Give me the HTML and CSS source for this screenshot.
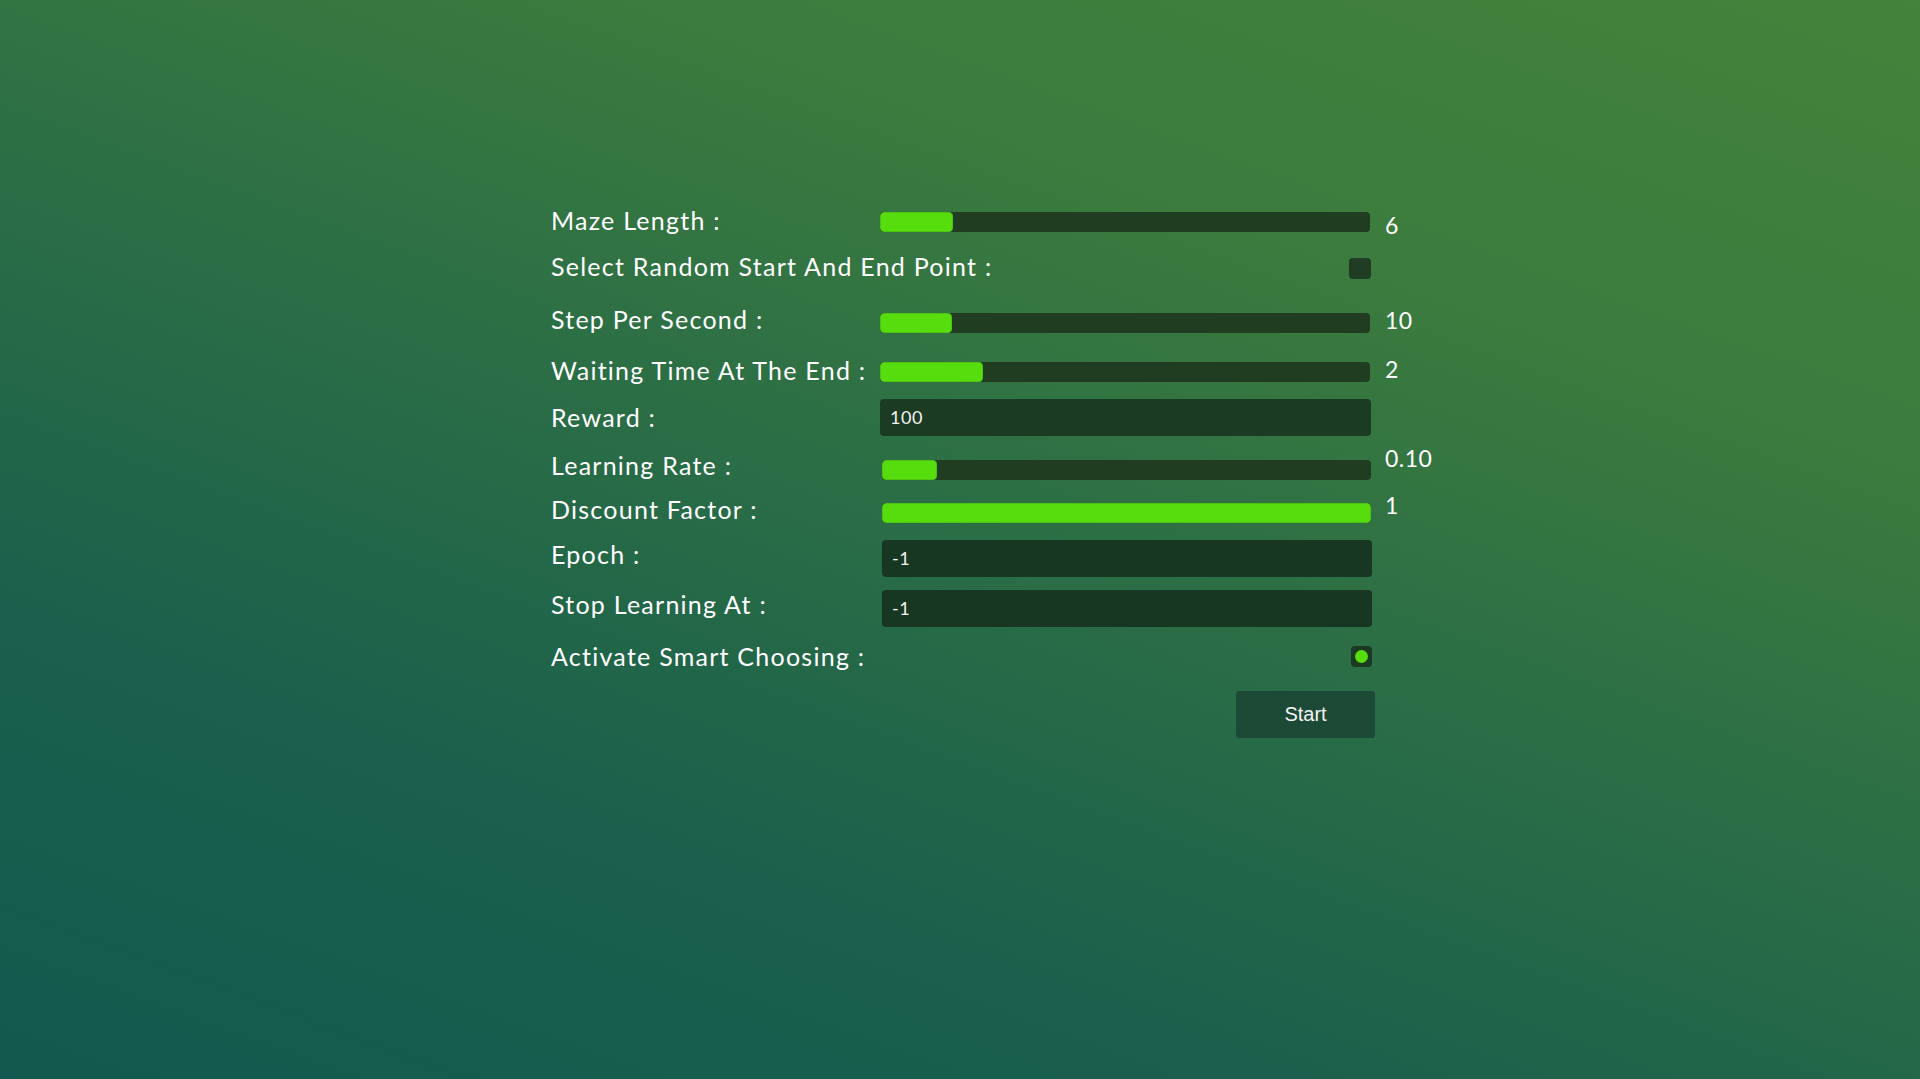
FILE: index.html
```html
<!DOCTYPE html>
<html lang="en">
<head>
<meta charset="utf-8">
<title>Maze Q-Learning Settings</title>
<link rel="stylesheet" href="styles.css">
</head>
<body>
<main class="screen">
  <form class="form">
    <div class="row r1">
      <span class="label">Maze Length :</span>
      <div class="slider"><div class="fill" style="width:14.9%"></div></div>
      <span class="val val-low">6</span>
    </div>
    <div class="row r2">
      <span class="label">Select Random Start And End Point :</span>
      <div class="toggle-cell"><span class="box"></span></div>
      <span class="val"></span>
    </div>
    <div class="row r3">
      <span class="label label-up">Step Per Second :</span>
      <div class="slider"><div class="fill" style="width:14.7%"></div></div>
      <span class="val val-up">10</span>
    </div>
    <div class="row r4">
      <span class="label">Waiting Time At The End :</span>
      <div class="slider"><div class="fill" style="width:21%"></div></div>
      <span class="val val-up">2</span>
    </div>
    <div class="row r5">
      <span class="label label-low">Reward :</span>
      <div class="input">100</div>
      <span class="val"></span>
    </div>
    <div class="row r6">
      <span class="label label-high">Learning Rate :</span>
      <div class="slider inset"><div class="fill" style="width:11.2%"></div></div>
      <span class="val val-high">0.10</span>
    </div>
    <div class="row r7">
      <span class="label label-up">Discount Factor :</span>
      <div class="slider inset"><div class="fill" style="width:100%"></div></div>
      <span class="val val-mid">1</span>
    </div>
    <div class="row r8">
      <span class="label label-up">Epoch :</span>
      <div class="input inset">-1</div>
      <span class="val"></span>
    </div>
    <div class="row r9">
      <span class="label label-up">Stop Learning At :</span>
      <div class="input inset">-1</div>
      <span class="val"></span>
    </div>
    <div class="row r10">
      <span class="label label-low">Activate Smart Choosing :</span>
      <div class="toggle-cell"><span class="box radio"><span class="dot"></span></span></div>
      <span class="val"></span>
    </div>
    <div class="actions">
      <button type="button" class="start">Start</button>
    </div>
  </form>
</main>
</body>
</html>
```

FILE: styles.css
```css
html, body {
  margin: 0;
  padding: 0;
}
body {
  width: 1920px;
  height: 1079px;
  overflow: hidden;
  background: linear-gradient(200deg, #43833b 0%, #3b7b3e 27%, #2a6d46 50%, #1b604c 73%, #13594f 100%);
  font-family: "Lato", "Open Sans", sans-serif;
  color: #ffffff;
}
.screen {
  padding-top: 202px;
}
.form {
  width: 900px;
  margin-left: 551px;
  display: flex;
  flex-direction: column;
}
.row {
  display: grid;
  grid-template-columns: 329px 491px 80px;
  grid-template-rows: 40px;
  align-items: center;
  height: 40px;
}
.r2 { margin-top: 6.5px; }
.r3 { margin-top: 14.5px; }
.r4 { margin-top: 9px; }
.r5 { margin-top: 5.5px; }
.r6 { margin-top: 12px; }
.r7 { margin-top: 3.5px; }
.r8 { margin-top: 5px; }
.r9 { margin-top: 10.5px; }
.r10 { margin-top: 8px; }

.label {
  font-size: 25px;
  font-weight: 400;
  line-height: 30px;
  white-space: nowrap;
  margin-bottom: 5px;
  letter-spacing: 1.25px;
}
.label-low { margin-bottom: 1px; }
.label-up { margin-bottom: 9px; }
.label-high { margin-bottom: 9px; }
.val {
  font-size: 23px;
  font-weight: 400;
  line-height: 28px;
  padding-left: 14px;
  white-space: nowrap;
  letter-spacing: 0.5px;
}
.val-low { margin-top: 6px; }
.val-up { margin-bottom: 7px; }
.val-mid { margin-bottom: 16px; }
.val-high { margin-bottom: 23px; }

.slider {
  height: 20px;
  width: 490px;
  background: #203d22;
  border-radius: 4px;
  overflow: hidden;
}
.slider.inset {
  width: 489px;
  margin-left: 2px;
}
.fill {
  height: 100%;
  box-sizing: border-box;
  background: #57dd0d;
  border: 1px solid #4cc411;
  border-radius: 4px;
}

.input {
  height: 37px;
  width: 491px;
  box-sizing: border-box;
  background: #1b3b22;
  border-radius: 4px;
  font-size: 18px;
  line-height: 37px;
  padding-left: 10px;
  color: #f2f2f2;
  letter-spacing: 0.5px;
}
.input.inset {
  width: 490px;
  margin-left: 2px;
  background: #183723;
}

.toggle-cell {
  display: flex;
  justify-content: flex-end;
}
.box {
  width: 22px;
  height: 21px;
  border-radius: 4px;
  background: #203d23;
  display: flex;
  align-items: center;
  justify-content: center;
}
.box.radio {
  width: 21px;
  margin-right: -1px;
  background: #1a3a24;
}
.dot {
  width: 13px;
  height: 13px;
  border-radius: 50%;
  background: #57dd0d;
}

.actions {
  width: 824px;
  display: flex;
  justify-content: flex-end;
  margin-top: 14.5px;
}
.start {
  width: 139px;
  height: 47px;
  border: none;
  border-radius: 3px;
  background: #1d4a36;
  color: #f4f4f4;
  font-family: "Liberation Sans", Arial, sans-serif;
  font-size: 20px;
  padding: 0;
  cursor: pointer;
}
```
